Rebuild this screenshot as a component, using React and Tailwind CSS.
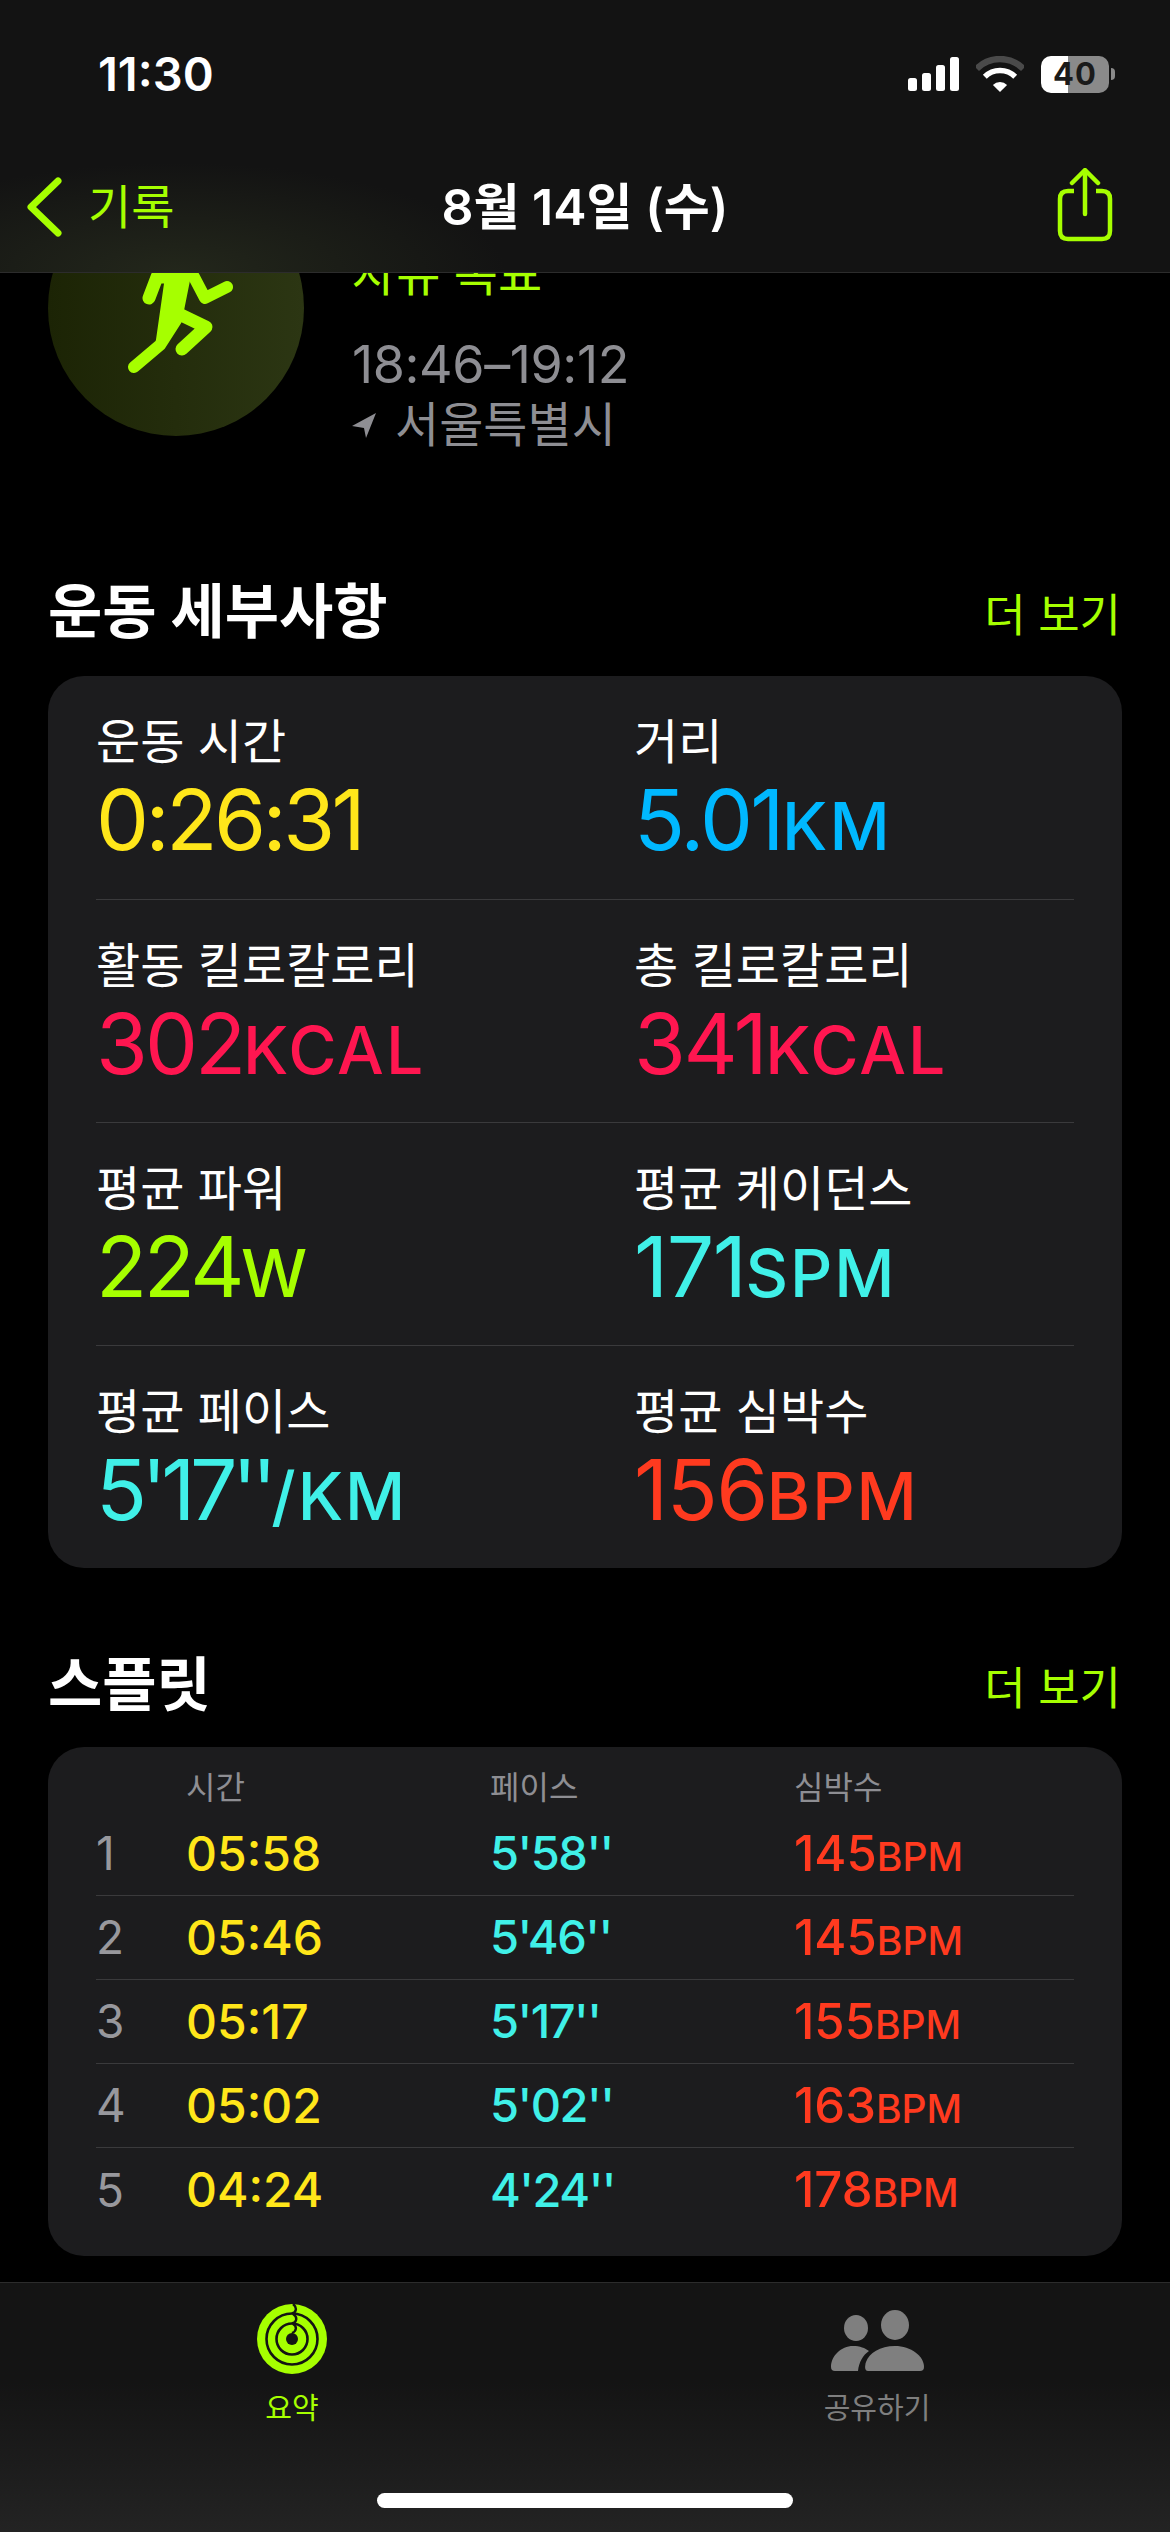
const G = "text-[#a6ff00]";

function Signal() {
  return (
    <svg width="51" height="34" viewBox="0 0 51 34" fill="#fff">
      <rect x="0" y="21" width="9" height="13" rx="2.5" />
      <rect x="14" y="16" width="9" height="18" rx="2.5" />
      <rect x="28" y="8" width="9" height="26" rx="2.5" />
      <rect x="42" y="0" width="9" height="34" rx="2.5" />
    </svg>
  );
}

function Wifi() {
  return (
    <svg width="48" height="37" viewBox="0 0 48 37" fill="none">
      <path d="M0.7 12.7A33 33 0 0 1 47.3 12.7" stroke="#4a4a4a" strokeWidth="6.5" />
      <path d="M8.8 20.8A21.5 21.5 0 0 1 39.2 20.8" stroke="#fff" strokeWidth="5.5" />
      <path d="M24 36L16.9 28.9A10 10 0 0 1 31.1 28.9Z" fill="#fff" />
    </svg>
  );
}

function Battery() {
  return (
    <div className="flex items-center gap-[2px]">
      <div className="w-[68px] h-[37px] rounded-[10px] flex items-center justify-center bg-[linear-gradient(to_right,#ffffff_40%,#8a8a8a_40%)] text-[#1a1a1a] text-[31px] font-bold tracking-[1px]">
        40
      </div>
      <div className="w-[4px] h-[12px] rounded-r-[4px] bg-[#8a8a8a]" />
    </div>
  );
}

function Share() {
  return (
    <svg width="60" height="76" viewBox="0 0 60 76" fill="none" stroke="#a6ff00" strokeLinecap="round" strokeLinejoin="round">
      <path d="M19 23H13Q5 23 5 31V63Q5 71 13 71H47Q55 71 55 63V31Q55 23 47 23H41" strokeWidth="4.5" strokeLinecap="butt" />
      <path d="M30 3V46" strokeWidth="4.5" />
      <path d="M17 15L30 2L43 15" strokeWidth="4.5" />
    </svg>
  );
}

function Runner() {
  return (
    <svg width="256" height="256" viewBox="0 0 256 256" fill="none" stroke="#a6ff00" strokeWidth="13" strokeLinecap="round" strokeLinejoin="round">
      <path d="M120 97H109L101 118" />
      <path d="M146 97L157 118L179 107" strokeWidth="12" />
      <path d="M129 133L158 147L134 169" />
      <path d="M122 90H138L128 140L112 165L86 187" strokeWidth="12" />
      <path d="M124 90H136L128 135L114 160Z" fill="#a6ff00" strokeWidth="12" />
    </svg>
  );
}

function Rings() {
  return (
    <svg width="70" height="70" viewBox="0 0 70 70" fill="none">
      <circle cx="35" cy="35" r="35" fill="#a6ff00" />
      <circle cx="35" cy="35" r="25.5" stroke="#141414" strokeWidth="2.6" />
      <circle cx="35" cy="35" r="15.5" stroke="#141414" strokeWidth="2.6" />
      <circle cx="35" cy="35" r="6" fill="#141414" />
      <path d="M36 0C40 3 40 8 35 9.5" stroke="#141414" strokeWidth="2.4" />
      <path d="M36 10C41 13 40 18 35 19.5" stroke="#141414" strokeWidth="2.4" />
      <path d="M36 20C40 22 40 27 35 29" stroke="#141414" strokeWidth="2.4" />
    </svg>
  );
}

function People() {
  return (
    <svg width="93" height="62" viewBox="0 0 93 62" fill="#7f7f7f">
      <ellipse cx="25" cy="18" rx="12" ry="13" />
      <ellipse cx="64" cy="15" rx="14" ry="15" />
      <path d="M37 61C33 61 34 55 35 52C38 43 49 36 64 36C80 36 93 46 93 57Q93 61 89 61Z" />
      <path d="M0 57C0 46 10 36 22 36C29 36 34 38 38 41C32 45 28 52 27 61H4Q0 61 0 57Z" />
    </svg>
  );
}

function LocationArrow() {
  return (
    <svg width="24" height="25" viewBox="0 0 24 25" fill="#8e8e93">
      <path d="M24 0L0 13L12 15L14 25Z" />
    </svg>
  );
}

function SectionHead({ title }) {
  return (
    <div className="h-[72px] flex items-center justify-between pl-12 pr-[49px]">
      <h2 className="text-[59px] leading-[72px] font-bold text-white">{title}</h2>
      <span className={`mt-[8px] text-[45px] leading-[60px] ${G}`}>더 보기</span>
    </div>
  );
}

const stats = [
  [
    { label: "운동 시간", value: "0:26:31", unit: "", color: "text-[#ffe61a]", track: "tracking-[-3.5px]" },
    { label: "거리", value: "5.01", unit: "KM", color: "text-[#00b8ff]", track: "tracking-[-2.5px]" },
  ],
  [
    { label: "활동 킬로칼로리", value: "302", unit: "KCAL", color: "text-[#ff1650]", track: "tracking-[-3px]" },
    { label: "총 킬로칼로리", value: "341", unit: "KCAL", color: "text-[#ff1650]", track: "tracking-[-2.5px]" },
  ],
  [
    { label: "평균 파워", value: "224", unit: "W", color: "text-[#a6ff00]", track: "tracking-[-3.5px]" },
    { label: "평균 케이던스", value: "171", unit: "SPM", color: "text-[#40f0e8]", track: "tracking-[-1.5px]" },
  ],
  [
    { label: "평균 페이스", value: "5'17''", unit: "/KM", color: "text-[#40f0e8]", track: "tracking-[-5.5px]" },
    { label: "평균 심박수", value: "156", unit: "BPM", color: "text-[#ff3a1f]", track: "tracking-[-1.5px]" },
  ],
];

const splits = [
  ["1", "05:58", "5'58''", "145"],
  ["2", "05:46", "5'46''", "145"],
  ["3", "05:17", "5'17''", "155"],
  ["4", "05:02", "5'02''", "163"],
  ["5", "04:24", "4'24''", "178"],
];

export default function App() {
  return (
    <div className="w-[1170px] h-[2532px] bg-black overflow-hidden flex flex-col font-['Inter','Noto_Sans_CJK_KR',sans-serif]">
      <header className="h-[273px] shrink-0 border-b border-[#2c2c2c] bg-[#131313] bg-[radial-gradient(ellipse_330px_110px_at_176px_273px,#23271b,#131313)]">
        <div className="h-[148px] flex items-center justify-between pl-[98px] pr-[55px]">
          <span className="text-[47px] font-semibold text-white">11:30</span>
          <div className="flex items-center gap-[17px]">
            <Signal />
            <Wifi />
            <Battery />
          </div>
        </div>
        <div className="h-[118px] grid grid-cols-[1fr_auto_1fr] items-center px-[55px]">
          <div className="-ml-[29px] flex items-center gap-[26px]">
            <svg width="36" height="60" viewBox="0 0 36 60" fill="none" stroke="#a6ff00" strokeWidth="7" strokeLinecap="round" strokeLinejoin="round">
              <path d="M32 4L5 30L32 56" />
            </svg>
            <span className={`text-[47px] ${G}`}>기록</span>
          </div>
          <h1 className="text-[50px] font-semibold text-white">8월 14일 (수)</h1>
          <div className="-mt-[2px] justify-self-end">
            <Share />
          </div>
        </div>
      </header>

      <main className="flex-1 overflow-hidden">
        <div className="-mt-[93px]">
          <div className="flex h-[275px] pl-12 gap-12">
            <div className="w-64 h-64 shrink-0 rounded-full bg-[linear-gradient(to_right,#1c2405,#2c3613)]">
              <Runner />
            </div>
            <div className="flex flex-col">
              <div className={`mt-[69px] text-[48px] leading-[50px] ${G}`}>자유 목표</div>
              <div className="mt-[36px] text-[52px] tracking-[-0.4px] leading-[60px] text-[#8e8e93]">18:46–19:12</div>
              <div className="flex items-center gap-[19px] text-[48px] leading-[60px] text-[#8e8e93]">
                <LocationArrow />
                <span>서울특별시</span>
              </div>
            </div>
          </div>

          <div className="mt-[121px]">
            <SectionHead title="운동 세부사항" />
          </div>
          <section className="mt-[28px] mx-12 px-12 rounded-[36px] bg-[#1c1c1e]">
            {stats.map((row, i) => (
              <div key={i} className="h-[223px] pt-[42px] grid grid-cols-[538px_1fr] border-t border-[#3a3a3c] first:border-t-0">
                {row.map((s) => (
                  <div key={s.label}>
                    <div className="text-[48px] leading-[48px] text-white">{s.label}</div>
                    <div className={`mt-[9px] leading-[90px] ${s.color}`}>
                      <span className={`text-[84px] ${s.track}`}>{s.value}</span>
                      <span className="text-[66px] font-medium tracking-[2px]">{s.unit}</span>
                    </div>
                  </div>
                ))}
              </div>
            ))}
          </section>

          <div className="mt-[81px]">
            <SectionHead title="스플릿" />
          </div>
          <section className="mt-[26px] mx-12 px-12 pt-[17px] pb-[24px] rounded-[36px] bg-[#1c1c1e]">
            <div className="grid grid-cols-[90px_304px_304px_1fr] h-[48px] items-center text-[32px] text-[#8e8e93]">
              <span />
              <span>시간</span>
              <span>페이스</span>
              <span>심박수</span>
            </div>
            {splits.map((r) => (
              <div key={r[0]} className="grid grid-cols-[90px_304px_304px_1fr] h-[84px] items-center border-b border-[#3a3a3c] last:border-b-0 font-medium">
                <span className="text-[46px] font-normal text-[#98989d]">{r[0]}</span>
                <span className="text-[48px] text-[#ffe61a]">{r[1]}</span>
                <span className="text-[47px] tracking-[-1.5px] text-[#40f0e8]">{r[2]}</span>
                <span className="text-[#ff3a1f]">
                  <span className="text-[49px]">{r[3]}</span>
                  <span className="text-[39px]">BPM</span>
                </span>
              </div>
            ))}
          </section>
        </div>
      </main>

      <nav className="h-[250px] shrink-0 border-t border-[#2c2c2c] bg-[linear-gradient(to_bottom,#141414,#141414_40%,#232323)] flex flex-col">
        <div className="flex pt-[21px]">
          <div className="w-[584px] flex flex-col items-center">
            <div className="h-[70px] flex items-center">
              <Rings />
            </div>
            <span className={`mt-[17px] text-[29px] leading-[36px] ${G}`}>요약</span>
          </div>
          <div className="w-[586px] flex flex-col items-center">
            <div className="h-[70px] pt-[4px] flex items-center">
              <People />
            </div>
            <span className="mt-[17px] text-[29px] leading-[36px] text-[#7f7f7f]">공유하기</span>
          </div>
        </div>
        <div className="mt-auto mb-[24px] mx-auto w-[416px] h-[15px] rounded-full bg-white" />
      </nav>
    </div>
  );
}
